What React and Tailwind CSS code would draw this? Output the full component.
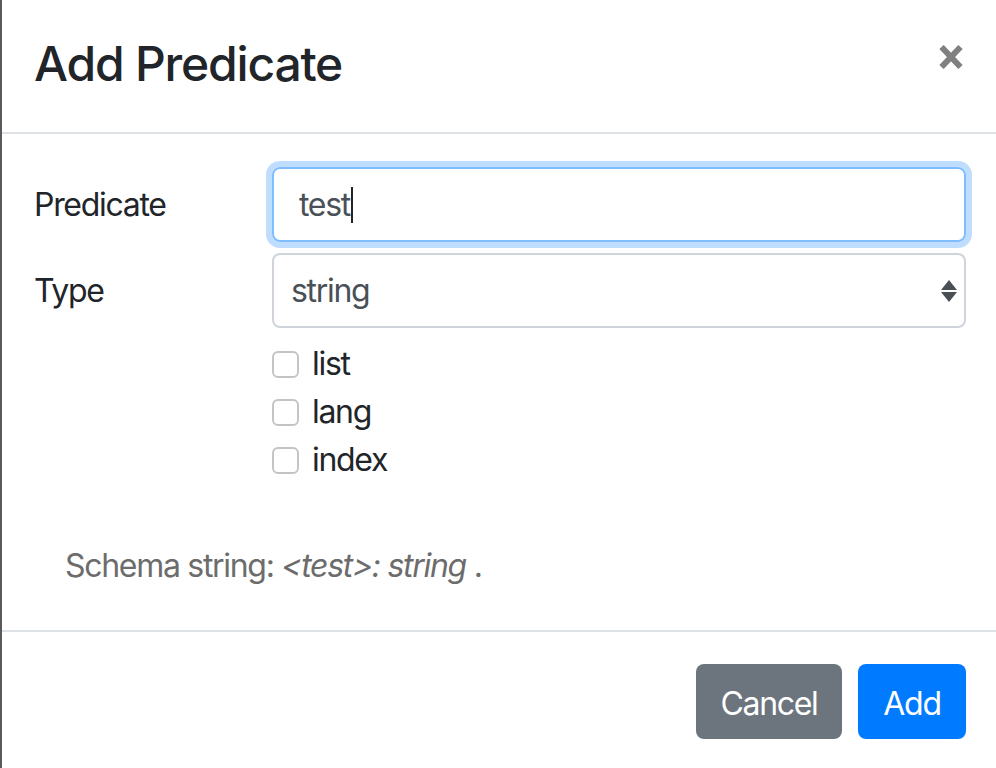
import { useState } from 'react'

const font = { fontFamily: 'Inter, "Liberation Sans", sans-serif' }

function CloseIcon() {
  return (
    <svg width="26" height="24" viewBox="0 0 26 24" className="block">
      <path d="M3.5 2 L22.5 22 M22.5 2 L3.5 22" stroke="#808080" strokeWidth="6" strokeLinecap="butt" />
    </svg>
  )
}

function SelectArrows() {
  return (
    <svg width="16" height="22" viewBox="0 0 16 22" className="block">
      <path d="M8 0 L16 10 L0 10 Z" fill="#4a4f55" />
      <path d="M0 12 L16 12 L8 22 Z" fill="#4a4f55" />
    </svg>
  )
}

function Check({ label }) {
  const [checked, setChecked] = useState(false)
  return (
    <label className="flex items-center h-[48px] cursor-pointer" onClick={() => setChecked(!checked)}>
      <span
        className={`w-[27px] h-[27px] rounded-[6px] border-2 border-[#c4c4c4] mr-[13px] ${checked ? 'bg-[#007bff]' : 'bg-white'}`}
      />
      <span className="text-[32px] leading-[48px] text-[#212529]">{label}</span>
    </label>
  )
}

export default function App() {
  return (
    <div className="w-[996px] h-[768px] overflow-hidden flex bg-white tracking-[-1.3px]" style={font}>
      {/* backdrop sliver */}
      <div className="w-[2px] shrink-0 bg-[#5a5a5a]" />

      <div className="w-[996px] shrink-0 bg-white flex flex-col">
        {/* Header */}
        <div className="h-[134px] shrink-0 flex items-start justify-between px-[32px] border-b-2 border-[#dee2e6]">
          <h5 className="mt-[28px] text-[48px] leading-[72px] font-medium tracking-[-1.2px] text-[#212529]">Add Predicate</h5>
          <button className="mt-[45px] mr-[2px] p-0">
            <CloseIcon />
          </button>
        </div>

        {/* Body */}
        <div className="px-[32px] pt-[33px] h-[496px] shrink-0">
          <div className="flex items-center">
            <label className="w-[238px] shrink-0 text-[32px] leading-[48px] text-[#212529]">Predicate</label>
            <div className="flex-1 h-[75px] rounded-[8px] border-2 border-[#80bdff] shadow-[0_0_0_6px_rgba(0,123,255,0.25)] flex items-center pl-[25px]">
              <span className="text-[32px] leading-[48px] text-[#495057]">test</span>
              <span className="w-[2px] h-[36px] bg-[#212529] ml-[1px]" />
            </div>
          </div>

          <div className="flex items-center mt-[11px]">
            <label className="w-[238px] shrink-0 text-[32px] leading-[48px] text-[#212529]">Type</label>
            <div className="flex-1 h-[75px] rounded-[8px] border-2 border-[#ced4da] flex items-center justify-between pl-[17px] pr-[7px]">
              <span className="text-[32px] text-[#495057]">string</span>
              <SelectArrows />
            </div>
          </div>

          <div className="ml-[238px] mt-[12px] flex flex-col">
            <Check label="list" />
            <Check label="lang" />
            <Check label="index" />
          </div>

          <p className="mt-[58px] pl-[31px] text-[32px] leading-[48px] text-[#6c6c6c]">
            Schema string: <em>&lt;test&gt;: string</em> .
          </p>
        </div>

        {/* Footer */}
        <div className="border-t-2 border-[#dee2e6] pt-[32px] px-[32px] flex justify-end gap-[16px]">
          <button className="w-[146px] h-[75px] pt-[4px] rounded-[8px] bg-[#6c757d] text-white text-[32px]">Cancel</button>
          <button className="w-[108px] h-[75px] pt-[4px] rounded-[8px] bg-[#007bff] text-white text-[32px]">Add</button>
        </div>
      </div>
    </div>
  )
}
